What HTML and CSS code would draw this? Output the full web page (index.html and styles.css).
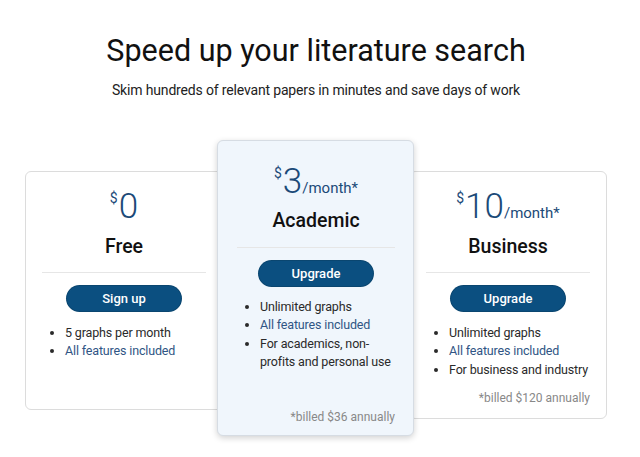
FILE: index.html
```html
<!DOCTYPE html>
<html lang="en">
<head>
<meta charset="utf-8">
<title>Pricing</title>
<link rel="stylesheet" href="styles.css">
</head>
<body>
<header class="hero">
  <h1 class="hero-title">Speed up your literature search</h1>
  <p class="hero-sub">Skim hundreds of relevant papers in minutes and save days of work</p>
</header>
<section class="plans">
  <div class="card card-free">
    <div class="price"><span class="cur">$</span><span class="amount">0</span></div>
    <div class="plan-name">Free</div>
    <hr class="divider">
    <div class="btn-row"><a class="btn">Sign up</a></div>
    <ul class="features">
      <li>5 graphs per month</li>
      <li><a class="link">All features included</a></li>
    </ul>
  </div>
  <div class="card card-featured">
    <div class="price"><span class="cur">$</span><span class="amount">3</span><span class="per">/month*</span></div>
    <div class="plan-name">Academic</div>
    <hr class="divider">
    <div class="btn-row"><a class="btn">Upgrade</a></div>
    <ul class="features">
      <li>Unlimited graphs</li>
      <li><a class="link">All features included</a></li>
      <li>For academics, non-profits and personal use</li>
    </ul>
    <div class="note">*billed $36 annually</div>
  </div>
  <div class="card card-business">
    <div class="price"><span class="cur">$</span><span class="amount">10</span><span class="per">/month*</span></div>
    <div class="plan-name">Business</div>
    <hr class="divider">
    <div class="btn-row"><a class="btn">Upgrade</a></div>
    <ul class="features">
      <li>Unlimited graphs</li>
      <li><a class="link">All features included</a></li>
      <li>For business and industry</li>
    </ul>
    <div class="note">*billed $120 annually</div>
  </div>
</section>
</body>
</html>
```
FILE: styles.css
```css
* { box-sizing: border-box; }
html, body { margin: 0; padding: 0; background: #fff; }
body {
  font-family: Roboto, "Liberation Sans", Arial, sans-serif;
  color: #222;
  width: 640px;
  height: 457px;
  overflow: hidden;
}
.hero { text-align: center; padding: 32px 8px 0 0; }
.hero-title {
  margin: 0;
  font-size: 30.5px;
  line-height: 38px;
  font-weight: 400;
  color: #111;
}
.hero-sub {
  margin: 10px 0 0;
  font-size: 14px;
  letter-spacing: -0.16px;
  line-height: 20px;
  color: #222;
}
.plans {
  display: flex;
  align-items: flex-start;
  margin: 40px 0 0 25px;
  width: 582px;
}
.card {
  display: flex;
  flex-direction: column;
  width: 198px;
  flex: none;
  background: #fff;
  border: 1px solid #dcdcdc;
  border-radius: 6px;
  padding: 15px 16px 12px;
  margin-top: 31px;
  --name-gap: 8px;
  --div-gap: 13px;
  --list-gap: 13px;
}
.card-free { min-height: 239px; }
.card-featured {
  position: relative;
  z-index: 1;
  width: 197px;
  margin: 0 -5px 0 -6px;
  min-height: 296px;
  padding: 21px 18px 10px 19px;
  background: #f0f6fc;
  border-color: #d6dce3;
  box-shadow: 0 2px 6px rgba(0, 0, 0, 0.18);
  --name-gap: 7px;
  --div-gap: 14px;
  --list-gap: 12px;
}
.price {
  text-align: center;
  color: #1b4a78;
  height: 40px;
  line-height: 40px;
  white-space: nowrap;
}
.cur {
  font-size: 14px;
  vertical-align: top;
  line-height: 22px;
  margin-right: 1px;
}
.amount { font-size: 35px; font-weight: 300; }
.per { font-size: 15px; font-weight: 400; }
.plan-name {
  margin-top: var(--name-gap);
  text-align: center;
  font-size: 19.5px;
  line-height: 24px;
  font-weight: 500;
  color: #111;
}
.divider {
  margin: var(--div-gap) 0 0;
  border: 0;
  border-top: 1px solid #e6e6e6;
  height: 0;
}
.btn-row { display: flex; justify-content: center; margin-top: 13px; }
.btn {
  display: flex;
  align-items: center;
  justify-content: center;
  width: 114px;
  height: 25px;
  border-radius: 13px;
  background: #0b4f80;
  color: #fff;
  font-size: 13px;
  font-weight: 500;
  box-shadow: 0 0 0 1px #0a4670;
}
.features {
  margin: var(--list-gap) 0 0;
  padding-left: 23px;
  font-size: 12.5px;
  letter-spacing: -0.15px;
  line-height: 18.3px;
  color: #2a2a2a;
}
.link { color: #2f5584; }
.note {
  margin-top: auto;
  padding-top: 11px;
  text-align: right;
  font-size: 12px;
  line-height: 16px;
  color: #888;
}
```
